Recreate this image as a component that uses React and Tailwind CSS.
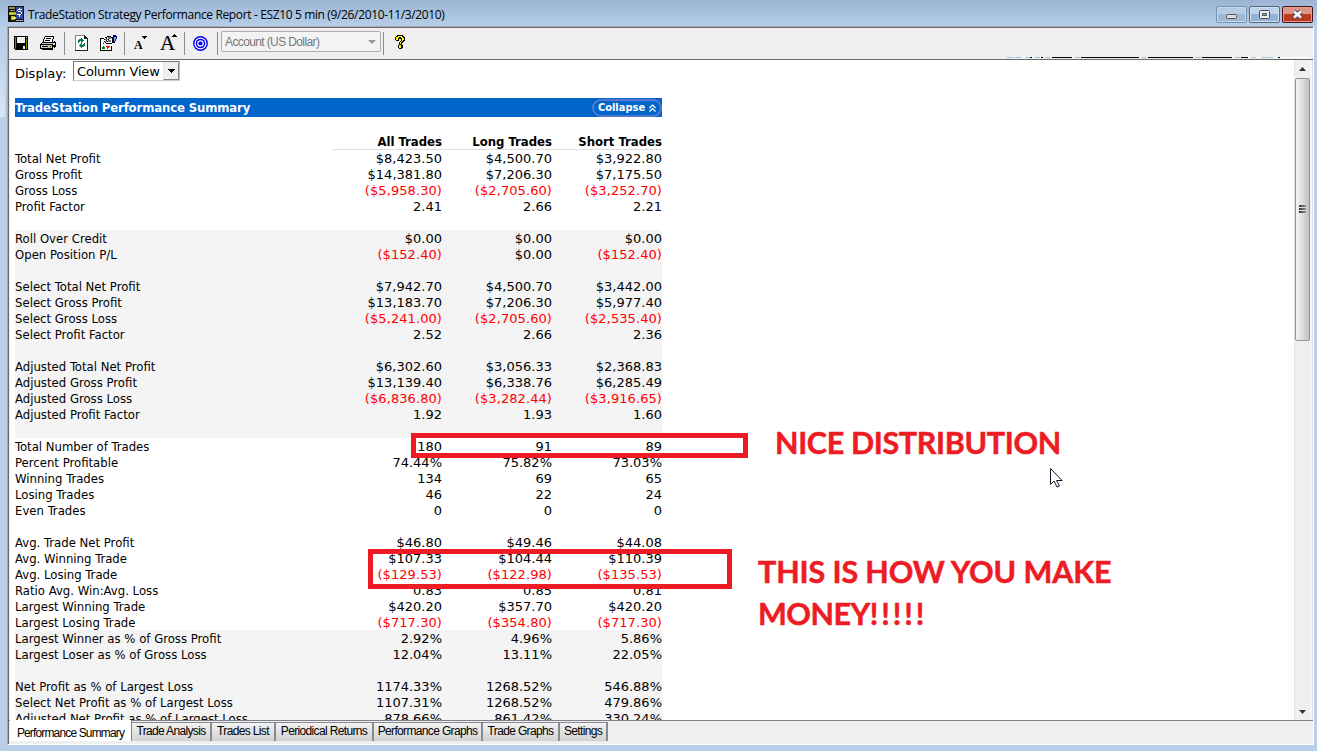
import React from 'react';

const SUMMARY_ROWS = [
  ['Total Net Profit', '$8,423.50', '$4,500.70', '$3,922.80'],
  ['Gross Profit', '$14,381.80', '$7,206.30', '$7,175.50'],
  ['Gross Loss', '($5,958.30)', '($2,705.60)', '($3,252.70)'],
  ['Profit Factor', '2.41', '2.66', '2.21'],
  [],
];

const SHADED_ROWS = [
  ['Roll Over Credit', '$0.00', '$0.00', '$0.00'],
  ['Open Position P/L', '($152.40)', '$0.00', '($152.40)'],
  [],
  ['Select Total Net Profit', '$7,942.70', '$4,500.70', '$3,442.00'],
  ['Select Gross Profit', '$13,183.70', '$7,206.30', '$5,977.40'],
  ['Select Gross Loss', '($5,241.00)', '($2,705.60)', '($2,535.40)'],
  ['Select Profit Factor', '2.52', '2.66', '2.36'],
  [],
  ['Adjusted Total Net Profit', '$6,302.60', '$3,056.33', '$2,368.83'],
  ['Adjusted Gross Profit', '$13,139.40', '$6,338.76', '$6,285.49'],
  ['Adjusted Gross Loss', '($6,836.80)', '($3,282.44)', '($3,916.65)'],
  ['Adjusted Profit Factor', '1.92', '1.93', '1.60'],
  [],
];

const TRADE_ROWS = [
  ['Total Number of Trades', '180', '91', '89'],
  ['Percent Profitable', '74.44%', '75.82%', '73.03%'],
  ['Winning Trades', '134', '69', '65'],
  ['Losing Trades', '46', '22', '24'],
  ['Even Trades', '0', '0', '0'],
  [],
  ['Avg. Trade Net Profit', '$46.80', '$49.46', '$44.08'],
  ['Avg. Winning Trade', '$107.33', '$104.44', '$110.39'],
  ['Avg. Losing Trade', '($129.53)', '($122.98)', '($135.53)'],
  ['Ratio Avg. Win:Avg. Loss', '0.83', '0.85', '0.81'],
  ['Largest Winning Trade', '$420.20', '$357.70', '$420.20'],
  ['Largest Losing Trade', '($717.30)', '($354.80)', '($717.30)'],
];

const PERCENT_ROWS = [
  ['Largest Winner as % of Gross Profit', '2.92%', '4.96%', '5.86%'],
  ['Largest Loser as % of Gross Loss', '12.04%', '13.11%', '22.05%'],
  [],
  ['Net Profit as % of Largest Loss', '1174.33%', '1268.52%', '546.88%'],
  ['Select Net Profit as % of Largest Loss', '1107.31%', '1268.52%', '479.86%'],
  ['Adjusted Net Profit as % of Largest Loss', '878.66%', '861.42%', '330.24%'],
];

const TABS = [
  { label: 'Trade Analysis', width: 'w-[80px]' },
  { label: 'Trades List', width: 'w-[64px]' },
  { label: 'Periodical Returns', width: 'w-[98px]' },
  { label: 'Performance Graphs', width: 'w-[109px]' },
  { label: 'Trade Graphs', width: 'w-[77px]' },
  { label: 'Settings', width: 'w-[48px]' },
];

const Rows = ({ rows, shaded }) => (
  <div className={shaded ? 'bg-[#f4f4f4]' : ''}>
    {rows.map(([label, ...values], i) => (
      <div key={i} className="grid h-4 grid-cols-[317px_110px_110px_110px] text-[13px] leading-[18px]">
        <span className="font-['DejaVu_Sans_Condensed','DejaVu_Sans',sans-serif] [font-stretch:condensed] whitespace-nowrap">{label}</span>
        {values.map((value, j) => (
          <span key={j} className={value[0] === '(' ? 'text-right tracking-[0.08px] text-[#f00]' : 'text-right'}>{value}</span>
        ))}
      </div>
    ))}
  </div>
);

const Separator = () => <div className="h-[23px] w-px bg-[#8c8c8c]" />;

const AppIcon = () => (
  <svg width="16" height="16" viewBox="0 0 16 16" shapeRendering="crispEdges">
    <path fill="#111" d="M0 0h16v16H0z" />
    <path fill="#8c8c50" d="M1 1h6v2H1zM2 4h5v1H2z" />
    <path fill="#b8b428" d="M1 6h7v3H1zM3 10h4v4H3z" />
    <path fill="#eee54a" d="M2 7h3v1H2zM4 11h4v2H4z" />
    <path fill="#34479a" d="M8 1h7v12H8z" />
    <path fill="#fff" d="M11 2h1v1h2v1h-4v1h3v1h1v2h-1v1h-1v2h-1v-2H9V8h4V6h-3V5H9V4h1V3h1z" />
    <path fill="#aaa" d="M8 14h7v1H8z" />
  </svg>
);

const SaveIcon = () => (
  <svg width="14" height="14" viewBox="0 0 14 14" shapeRendering="crispEdges">
    <path d="M0 0h14v14H1v-1H0z" />
    <path fill="#808000" d="M1 1h1v7h10V3h1v10h-1v-5H2v5H1z" />
    <path fill="#efefef" d="M3 1h8v6H3zM12 1h1v1h-1zM9 10h2v3H9z" />
  </svg>
);

const PrintIcon = () => (
  <svg width="16" height="14" viewBox="0 0 16 14" shapeRendering="crispEdges">
    <path fill="#fff" d="M5 1h8v3h-1v3H4V5h1z" />
    <path d="M5 0h9v1H5zM4 1h1v2H4zM13 1h1v2h-1zM6 2h5v1H6zM3 3h1v3H3zM5 4h5v1H5zM12 3h1v3h-1zM2 6h12v1H2zM1 7h1v1H1zM0 8h13v1H0zM0 9h1v4H0zM12 9h1v4h-1zM1 12h12v2H2v-1H1zM14 5h1v1h1v5h-1v1h-1v-1h-1V9h2V7h-1z" />
    <path fill="#c8c8c8" d="M2 7h11v1H2zM1 9h11v3H1z" />
    <path d="M2 11h9v-1H2z" />
    <path fill="#d5d53a" d="M8 10h2v1H8z" />
  </svg>
);

const RefreshIcon = () => (
  <svg width="13" height="16" viewBox="0 0 13 16" shapeRendering="crispEdges">
    <path fill="#fff" d="M0 0h10l3 3v13H0z" />
    <path fill="#888" d="M0 0h9v1H1v14H0z" />
    <path fill="#222" d="M9 0h1v1h1v1h1v1h1v13H0v-1h12V4H9z" />
    <path fill="#008048" d="M6 3h1v1h1v1h1v1H8v1H7v1H6V6H5v1H4v1H3V5h1V4h2zM9 8h1v3H9v1H7v1H6v-1H5v-1H4v-1h1V9h1V8h1v2h1V9h1z" />
  </svg>
);

const PropertiesIcon = () => (
  <svg width="17" height="16" viewBox="0 0 17 16" shapeRendering="crispEdges">
    <path fill="#fff" d="M0 4h12v11H0z" />
    <path d="M0 3h4v1H1v11h10v-4h1v5H0zM4 4h1v1H4zM6 3h1v1H6zM5 2h2v1H5zM7 1h4v1H7zM9 3h1v1H9zM4 6h1v1H4zM6 5h1v1H6zM8 4h1v1H8zM3 8h1v1H3zM5 7h1v1H5zM7 6h1v1H7zM9 5h1v1H9zM6 8h6v1H6zM11 2h2v1h-2zM12 7h2v1h-2zM12 3h1v4h-1z" />
    <path fill="#777" d="M5 4h3v1H5zM5 6h2v1H5zM8 5h3v2H8zM8 2h3v2H8z" />
    <path fill="#000080" d="M13 0h3v1h1v3h-1v2h-1v2h-1V7h-1z" />
    <path fill="#7ab0f0" d="M14 2h2v2h-1v2h-1z" />
    <path fill="#008000" d="M3 11h1v1h1v2H2v-2h1z" />
    <path fill="#f00" d="M6 11h4v1H9v1H8v1H7v-2H6z" />
  </svg>
);

const TargetIcon = () => (
  <svg width="15" height="15" viewBox="0 0 15 15">
    <circle cx="7.5" cy="7.5" r="7.4" fill="#0000f0" />
    <circle cx="7.5" cy="7.5" r="5.4" fill="none" stroke="#fff" strokeWidth="1.2" />
    <circle cx="7.5" cy="7.5" r="2.7" fill="none" stroke="#fff" strokeWidth="1.2" />
  </svg>
);

const HelpIcon = () => (
  <svg width="10" height="14" viewBox="0 0 10 14" shapeRendering="crispEdges">
    <path d="M2 0h6v1h1v1h1v4H9v1H8v1H7v2h1v3H7v1H4v-1H3v-3h1V7h1V6h1V4H4v2H1V5H0V2h1V1h1z" />
    <path fill="#ff0" d="M3 1h4v1h1v1h1v2H8v1H7v1H6v2H5V7h1V6h1V3H6V2H4v1H3v2H1V2h2zM4 10h2v3H4z" />
  </svg>
);

const Toolbar = () => (
  <div className="relative flex h-[31px] items-center bg-[#efefef] pb-px pl-[5px]">
    <SaveIcon />
    <div className="ml-3"><PrintIcon /></div>
    <div className="ml-2"><Separator /></div>
    <div className="ml-[10px]"><RefreshIcon /></div>
    <div className="ml-3"><PropertiesIcon /></div>
    <div className="ml-[7px]"><Separator /></div>
    <div className="relative ml-[9px] w-3 font-['Liberation_Serif',serif] text-[12px] leading-3 font-bold">
      <span className="relative top-[2px]">A</span>
      <svg className="absolute -top-[1px] left-2" width="5" height="3" shapeRendering="crispEdges"><path d="M0 0h5v1H4v1H3v1H2V2H1V1H0z" /></svg>
    </div>
    <div className="relative ml-[14px] w-[16px] font-['Liberation_Serif',serif] text-[21px] leading-5">
      <span className="relative [-webkit-text-stroke:0.2px_#000]">A</span>
      <svg className="absolute top-[1px] left-3" width="5" height="3" shapeRendering="crispEdges"><path d="M2 0h1v1h1v1h1v1H0V2h1V1h1z" /></svg>
    </div>
    <div className="ml-2"><Separator /></div>
    <div className="ml-2"><TargetIcon /></div>
    <div className="ml-[9px]"><Separator /></div>
    <div className="-mt-[3px] ml-[3px] flex h-[21px] w-[160px] items-center justify-between rounded-[2px] border border-[#adadad] bg-[#f3f3f3] pr-1 pl-[3px] font-['Liberation_Sans',Arial,sans-serif] text-[12px] text-[#777]">
      <span className="tracking-[-0.62px]">Account (US Dollar)</span>
      <svg width="8" height="4"><path fill="#999" d="M0 0h8L4 4z" /></svg>
    </div>
    <div className="ml-[2px]"><Separator /></div>
    <div className="-mt-[2px] ml-[11px]"><HelpIcon /></div>
    <svg className="absolute right-[2px] bottom-[1px]" width="308" height="1" shapeRendering="crispEdges">
      <path fill="#fff" d="M0 0h308v1H0z" />
      <path fill="#a9c8dc" d="M3 0h8v1H3zM12 0h7v1h-7zM22 0h7v1h-7zM31 0h6v1h-6zM42 0h6v1h-6zM71 0h6v1h-6zM138 0h6v1h-6zM192 0h6v1h-6zM231 0h6v1h-6zM248 0h5v1h-5zM258 0h12v1h-12z" />
      <path d="M27 0h2v1h-2zM38 0h2v1h-2zM49 0h20v1H49zM78 0h58v1H78zM145 0h45v1h-45zM199 0h30v1h-30zM238 0h7v1h-7zM275 0h2v1h-2z" />
    </svg>
  </div>
);

const TitleBar = () => (
  <div className="flex h-[26px] shrink-0 bg-linear-to-b from-[#9ab4d2] to-[#b6cee9] pl-2">
    <div className="mt-[6px]"><AppIcon /></div>
    <span className="mt-[5px] ml-1 font-['Open_Sans','Noto_Sans',sans-serif] text-[12px] leading-5 tracking-[-0.36px] whitespace-nowrap">
      TradeStation Strategy Performance Report - ESZ10 5 min (9/26/2010-11/3/2010)
    </span>
    <div className="mt-[6px] mr-[4px] ml-auto flex gap-[2px]">
      <div className="flex h-[17px] w-[31px] items-center justify-center rounded-[2px] border border-[#7890b0] bg-linear-to-b from-[#b5cbe3] from-50% to-[#9db9d7] to-50% shadow-[inset_0_0_0_1px_#c5d8eb]">
        <svg className="mt-1" width="11" height="5"><rect x=".5" y=".5" width="10" height="4" rx="1" fill="#ddd" stroke="#555" /></svg>
      </div>
      <div className="flex h-[17px] w-[31px] items-center justify-center rounded-[2px] border border-[#53677f] bg-linear-to-b from-[#bdd3ea] from-50% to-[#91b2d5] to-50% shadow-[inset_0_0_0_1px_#d0e1f1]">
        <svg width="11" height="9"><rect x=".5" y=".5" width="10" height="8" rx="1" fill="#eee" stroke="#444f5d" /><path fill="#9db7d2" stroke="#444f5d" d="M3.5 3.5h4v2h-4z" /></svg>
      </div>
      <div className="flex h-[17px] w-[31px] items-center justify-center rounded-[2px] border border-[#4b1018] bg-linear-to-b from-[#dc9587] from-50% to-[#b93a23] to-50% shadow-[inset_0_0_0_1px_#df9e91]">
        <svg width="13" height="11"><path d="M3 2.5l7 6M10 2.5l-7 6" stroke="#484e61" strokeWidth="4.5" /><path d="M3 2.5l7 6M10 2.5l-7 6" stroke="#fff" strokeWidth="2.5" /></svg>
      </div>
    </div>
  </div>
);

const Scrollbar = () => (
  <div className="flex w-[16px] shrink-0 flex-col border-l border-[#e3e3e3] bg-[#efefef]">
    <div className="flex h-[18px] items-center justify-center"><svg width="7" height="4"><path fill="#333" d="M0 4h7L3.5 0z" /></svg></div>
    <div className="flex h-[263px] w-[15px] flex-col items-center rounded-[2px] border border-[#929292] bg-linear-to-r from-[#f5f5f5] via-[#dcdcde] to-[#c0c0c5] pt-[126px]">
      <div className="flex w-[7px] flex-col gap-px">
        <i className="h-[2px] bg-linear-to-r from-[#333] to-[#999]" />
        <i className="h-[2px] bg-linear-to-r from-[#333] to-[#999]" />
        <i className="h-[2px] bg-linear-to-r from-[#333] to-[#999]" />
      </div>
    </div>
    <div className="mt-auto flex h-[17px] items-center justify-center"><svg width="7" height="4"><path fill="#333" d="M0 0h7L3.5 4z" /></svg></div>
  </div>
);

const Report = () => (
  <div className="relative min-w-0 flex-1 overflow-hidden bg-white pl-[5px] font-['DejaVu_Sans',Verdana,sans-serif] text-black">
    <div className="flex h-[38px] items-start">
      <span className="mt-[4px] w-[58px] text-[13px] leading-5">Display:</span>
      <div className="mt-px flex h-[20px] w-[107px] justify-between border border-[#777] border-r-[#bbb] border-b-[#ccc] bg-white pl-[3px] text-[13px] leading-[19px]">
        <span className="tracking-[-0.2px]">Column View</span>
        <div className="flex w-4 items-center justify-center border-t border-r border-b border-l border-[#e8e8e8] border-r-[#888] border-b-[#888] bg-[#efefef]">
          <svg width="7" height="4" shapeRendering="crispEdges"><path d="M0 0h7v1H6v1H5v1H4v1H3V3H2V2H1V1H0z" /></svg>
        </div>
      </div>
    </div>
    <div className="flex h-[19px] w-[647px] items-center justify-between bg-[#0066cc] text-white">
      <span className="font-['DejaVu_Sans_Condensed','DejaVu_Sans',sans-serif] [font-stretch:condensed] text-[13px] tracking-[-0.13px] font-bold">TradeStation Performance Summary</span>
      <div className="flex h-[18px] w-[70px] items-center justify-center gap-1 rounded-full border-2 border-[#5577d0] font-['DejaVu_Sans_Condensed','DejaVu_Sans',sans-serif] [font-stretch:condensed] text-[11px] font-bold">
        <span className="pt-px">Collapse</span>
        <svg width="7" height="8" fill="none" stroke="#fff" strokeWidth="1.2"><path d="M.5 4l3-3 3 3M.5 7.500l3-3 3 3" /></svg>
      </div>
    </div>
    <div className="grid h-[33px] w-[647px] grid-cols-[317px_110px_110px_110px] items-end text-right font-['DejaVu_Sans_Condensed','DejaVu_Sans',sans-serif] [font-stretch:condensed] text-[13px] leading-[18px] font-bold">
      <span />
      <span className="h-[17px] border-b border-[#e0e0e0]">All Trades</span>
      <span className="h-[17px] border-b border-[#e0e0e0]">Long Trades</span>
      <span className="h-[17px] border-b border-[#e0e0e0]">Short Trades</span>
    </div>
    <div className="w-[647px]">
      <Rows rows={SUMMARY_ROWS} />
      <Rows rows={SHADED_ROWS} shaded />
      <Rows rows={TRADE_ROWS} />
      <Rows rows={PERCENT_ROWS} shaded />
    </div>

    {/* Mark-up drawn over the report */}
    <div className="absolute top-[373px] left-[401px] h-[25px] w-[337px] border-5 border-[#ed1c24]" />
    <div className="absolute top-[489px] left-[358px] h-[40px] w-[364px] border-5 border-[#ed1c24]" />
    <div className="absolute top-[361px] left-[765px] font-['Lato',Calibri,sans-serif] text-[30.5px] leading-[42px] font-bold tracking-[-0.35px] whitespace-nowrap text-[#ed1c24] [-webkit-text-stroke:0.5px_#ed1c24]">NICE DISTRIBUTION</div>
    <div className="absolute top-[490px] left-[748px] font-['Lato',Calibri,sans-serif] text-[30.5px] leading-[42px] font-bold whitespace-nowrap text-[#ed1c24] [-webkit-text-stroke:0.5px_#ed1c24]">
      <div className="tracking-[-0.1px]">THIS IS HOW YOU MAKE</div>
      <div><span className="tracking-[-0.5px]">MONEY</span><span className="tracking-[2.9px]">!!!!!</span></div>
    </div>
    <svg className="absolute top-[408px] left-[1040px]" width="13" height="20"><path fill="#fff" stroke="#15152a" d="M.5.5v16l3.500-3.500 3 6 2.500-1-3-5.500H12z" /></svg>
  </div>
);

export default function App() {
  return (
    <div className="flex h-[751px] w-[1317px] flex-col overflow-hidden bg-[#b9d0eb] text-black">
      <TitleBar />
      <div className="flex min-h-0 flex-1">
        <div className="w-[7px] bg-[#b9cfe9] pt-[19px]"><div className="h-[72px] w-[5px] bg-linear-to-b from-[#b9cfe9] to-[#dce7f3]" /></div>
        <div className="flex h-[719px] w-[1307px] flex-col border-t border-r border-b border-l border-[#aaa] border-r-white border-b-white bg-[#efefef]">
          <div className="flex min-h-0 flex-1 flex-col border-t border-l border-[#696969]">
            <Toolbar />
            <div className="flex h-[661px] shrink-0 border-t border-[#696969] pl-px">
              <Report />
              <Scrollbar />
              <div className="w-[3px] border-r border-[#ddd] bg-[#f5f5f5]" />
            </div>
            <div className="flex h-[22px] items-start border-t border-[#80808a] pl-px font-['Liberation_Sans',Arial,sans-serif] text-[12px] leading-[19px] tracking-[-0.65px] whitespace-nowrap">
              <div className="-mt-px h-[21px] w-[122px] border-r border-[#80808a] bg-white pt-[4px] text-center tracking-[-0.85px]">Performance Summary</div>
              {TABS.map((tab) => (
                <div key={tab.label} className={`${tab.width} mt-px h-[19px] border-t border-r-2 border-[#888a92] bg-linear-to-b from-[#f2f2f2] to-[#d2d2d2] text-center leading-[17px]`}>{tab.label}</div>
              ))}
            </div>
          </div>
        </div>
      </div>
    </div>
  );
}
